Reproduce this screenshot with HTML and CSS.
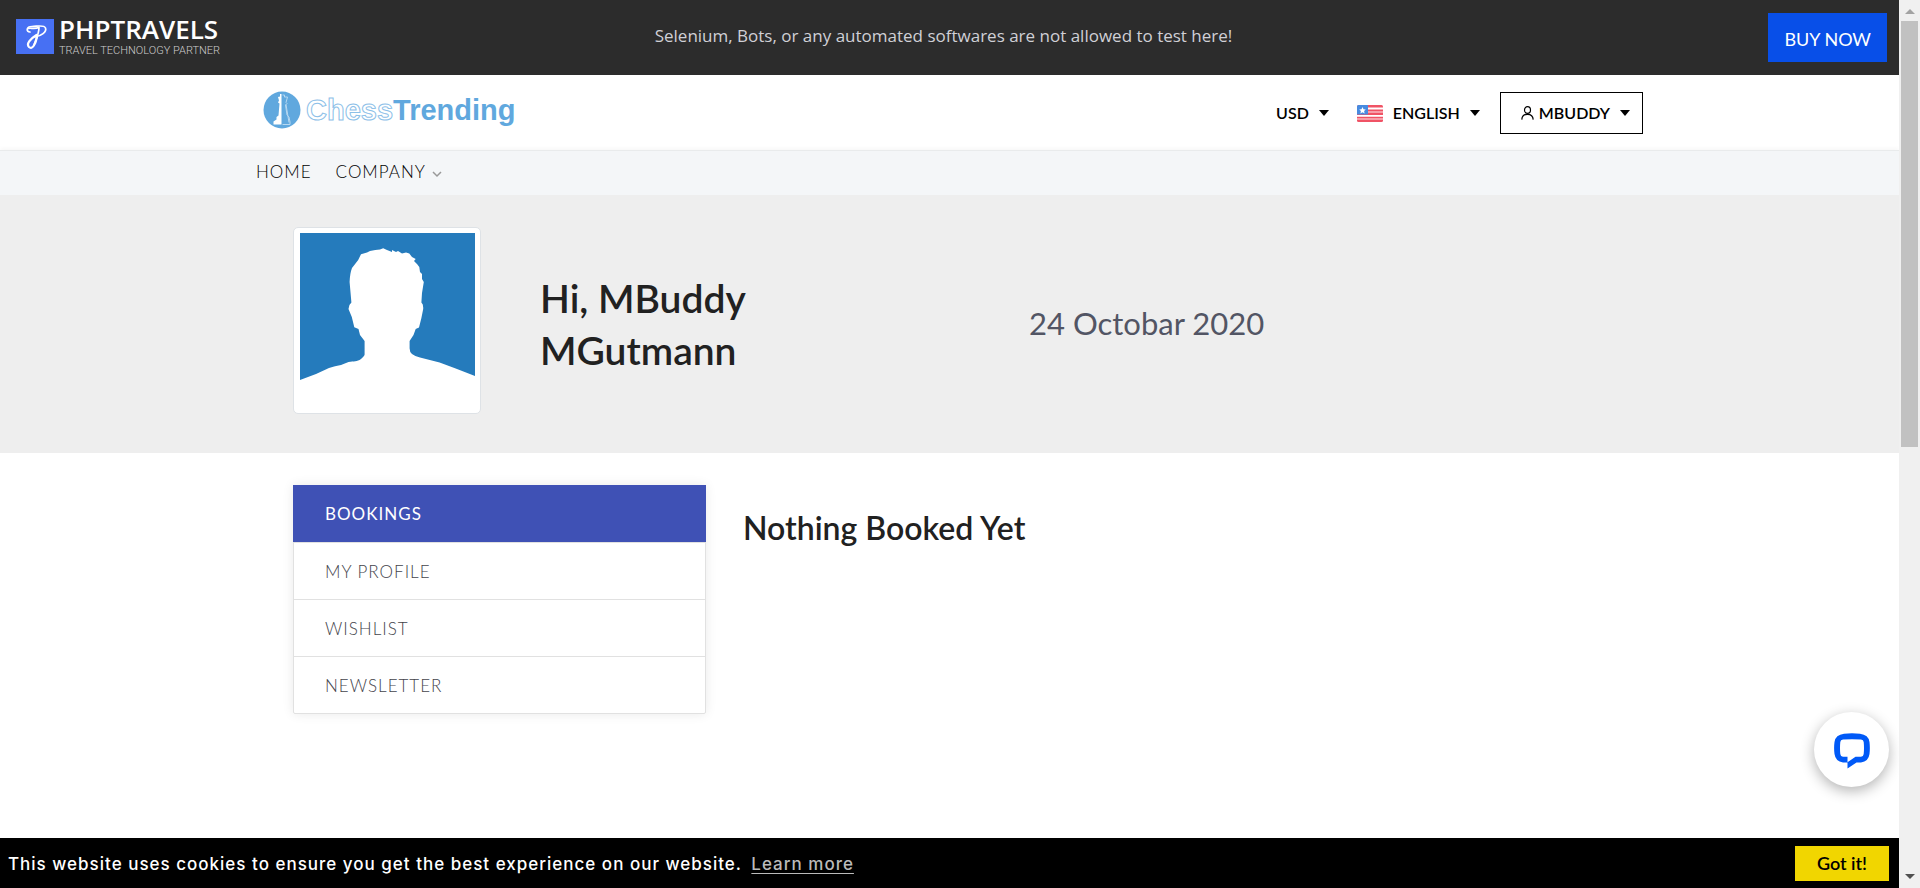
FILE: index.html
```html
<!DOCTYPE html>
<html lang="en">
<head>
<meta charset="utf-8">
<meta name="viewport" content="width=device-width, initial-scale=1">
<title>My Account</title>
<link rel="stylesheet" href="styles.css">
</head>
<body>
<div class="promo">
  <a class="brand" href="#">
    <svg class="brand-mark" viewBox="0 0 38 35" aria-hidden="true"><rect width="38" height="35" fill="#4770f3"/><g fill="none" stroke="#fff" stroke-linecap="round" stroke-linejoin="round"><path d="M14 13C10 13 10 7.500 16 7.500C21 7.500 28 5.500 29.500 9C31 13 25 17 19 18" stroke-width="1.700"/><path d="M12 9.500C15 8.500 18 10.500 23 8.500C23 15 20 20 18 26" stroke-width="1.700"/><path d="M20.500 16C14 20 10 25 13 28C16.500 31 19.500 25 21 18" stroke-width="2.200"/></g></svg>
    <span class="brand-text"><span class="brand-name">PHPTRAVELS</span><span class="brand-tag">TRAVEL TECHNOLOGY PARTNER</span></span>
  </a>
  <p class="promo-note">Selenium, Bots, or any automated softwares are not allowed to test here!</p>
  <a class="buy" href="#">BUY NOW</a>
</div>
<header class="header">
  <div class="container header-row">
    <a class="logo" href="#">
      <svg class="logo-mark" viewBox="0 0 38 38" aria-hidden="true"><circle cx="19" cy="19" r="18.500" fill="#60a8de"/><path d="M18.500 3v30.500H10.500v-3l3-2v-2.500l2-1.500 1-12-1.500-1 1-2-1-3.500 2-.5V3z" fill="#fff"/><path d="M19.500 4h2v2h3l-1.500 5.500 1 1-1.500 1.500 1.500 10 2 2 1 5v2.500H19.500M23 13.500l3 18" fill="none" stroke="#b6d8f1" stroke-width="1"/></svg>
      <span class="logo-text"><span class="logo-light">Chess</span><span>Trending</span></span>
    </a>
    <div class="tools">
      <button class="tool" type="button">USD <span class="caret"></span></button>
      <button class="tool" type="button">
        <svg class="flag" viewBox="0 0 26 17" aria-hidden="true"><rect width="26" height="17" rx="1.500" fill="#f05365"/><path d="M11 3.500h15M0 10.800h26" stroke="#fff" stroke-width="1.800"/><path d="M11 7h15M0 14h26" stroke="#f9b6be" stroke-width="1.500"/><path d="M1.500 0H11v9.500H0v-8A1.500 1.500 0 0 1 1.500 0z" fill="#478be0"/><path d="M5.500 2l1 2.200 2.300.3-1.700 1.600.5 2.400-2.100-1.200-2.100 1.200.5-2.400-1.700-1.600 2.300-.3z" fill="#fff"/></svg>
        ENGLISH <span class="caret"></span></button>
      <button class="tool account" type="button"><svg class="user" viewBox="0 0 13 14" aria-hidden="true"><g fill="none" stroke="#000" stroke-width="1.200"><ellipse cx="6.500" cy="4" rx="3" ry="3.300"/><path d="M.8 13.600C1 10 3.500 8.300 6.500 8.300s5.500 1.700 5.700 5.300"/></g></svg>MBUDDY <span class="caret"></span></button>
    </div>
  </div>
</header>
<nav class="nav">
  <div class="container nav-row">
    <a href="#">HOME</a>
    <a href="#">COMPANY <svg class="chev" viewBox="0 0 10 7" aria-hidden="true"><path d="M1 1l4 4 4-4" fill="none" stroke="#999" stroke-width="1.500"/></svg></a>
  </div>
</nav>
<section class="hero">
  <div class="container inset hero-row">
    <div class="avatar">
      <svg viewBox="0 0 175 175" role="img" aria-label="Profile picture"><rect width="175" height="175" fill="#257bbc"/><path fill="#fff" d="M0 147L16 141L29 135Q35 133 41 132L48.500 129C54 128 57 129 61 126Q65 123 64.600 121V108L60 102L58.500 96L54.300 94.300L51.800 84L48.500 76Q48.500 72 51.400 69.600L49.600 49Q50 40 52 35L58.200 27L61 21.300L67 19.600L70 18L75.300 17L80 16.500L83.200 15.300L87 17L92 19V17L96 19L98 18L102 20.500L106 19.500L109.300 20.600L112 24L115.700 26L114 28L117 31L119.300 34L120 39L122 41V46L123.800 49L122 60L121.400 69.600Q123.500 71 123.200 76L121.400 85L119 94.600L115.700 96L113.500 102L109.600 108V115Q109.500 119 112 121Q116 124 120 124.600L139.600 129.600L155.700 135.600L175 143V175H0Z"/></svg>
    </div>
    <h1 class="greeting">Hi, MBuddy MGutmann</h1>
    <p class="date">24 Octobar 2020</p>
  </div>
</section>
<main class="container inset main-row">
  <nav class="side" aria-label="Account">
    <a class="active" href="#">BOOKINGS</a>
    <a href="#">MY PROFILE</a>
    <a href="#">WISHLIST</a>
    <a href="#">NEWSLETTER</a>
  </nav>
  <h2 class="empty">Nothing Booked Yet</h2>
</main>
<button class="chat" type="button" aria-label="Open chat"><svg viewBox="0 0 36 36" aria-hidden="true"><path fill-rule="evenodd" d="M10 .8Q18-.2 26 .8Q34.500 1.800 35.500 9Q36.200 15 35.500 21Q34.500 28.500 27 29.500H22.500L13.500 35.500V29.500H9Q1.500 28.500.5 21Q-.3 15 .5 9Q1.500 1.800 10 .8ZM9 6.500Q6.500 6.800 6.300 9Q5.700 15 6.300 21Q6.500 23.500 9 23.800H13.500V29.300L21.500 23.800H27Q29.500 23.500 29.700 21Q30.300 15 29.700 9Q29.500 6.800 27 6.500Q18 5.900 9 6.500Z" fill="#0059f7"/></svg></button>
<div class="cookies">
  <p>This website uses cookies to ensure you get the best experience on our website. <a href="#">Learn more</a></p>
  <button class="got" type="button">Got it!</button>
</div>
<div class="scrollbar" aria-hidden="true"><span class="arrow up"></span><span class="thumb"></span><span class="arrow down"></span></div>
</body>
</html>
```
FILE: styles.css
```css
*{box-sizing:border-box}
:root{--bar:21px}
body{margin:0;padding-right:var(--bar);min-height:100vh;background:#fff;color:#212121;font-family:Lato,"Open Sans",sans-serif;font-size:17px;line-height:24px}
a{color:inherit;text-decoration:none}
h1,h2,p{margin:0}
button{border:0;background:none;padding:0;color:inherit;font:inherit;cursor:pointer}
svg{display:block}
.container{max-width:1387px;margin:0 auto}
.inset{padding:0 37px}

.promo{display:grid;grid-template-columns:1fr auto 1fr;align-items:center;height:75px;padding:0 12px 0 16px;background:#2c2c2c;color:#d0d0d6}
.brand{display:flex;gap:5px;color:#fff}
.brand-mark{width:38px;height:35px}
.brand-text{display:flex;flex-direction:column;margin-top:-2px}
.brand-name{font-family:"Open Sans",sans-serif;font-size:26px;line-height:24px;font-weight:600}
.brand-tag{font-family:Roboto,sans-serif;font-size:11px;line-height:12px;margin-top:4px;color:#ccc;font-weight:300}
.promo-note{font-family:"Open Sans",sans-serif;font-size:17px;font-weight:500;padding:0 16px 4px 0}
.buy{justify-self:end;background:#084fe8;color:#fff;padding:14px 16px 11px;font-size:18px}

.header-row{display:flex;justify-content:space-between;align-items:center;height:75px}
.logo{display:flex;align-items:center;gap:5px;margin-left:7px;padding-bottom:6px;color:#60a8de}
.logo-mark{width:38px;height:38px}
.logo-text{font:bold 29px/36px "Liberation Sans",Arial,sans-serif}
.logo-light{color:#fff;-webkit-text-stroke:1px #8cc0e8}
.tools{display:flex;align-items:center;padding-top:1px;color:#000;font-size:16px}
.tool{display:flex;align-items:center;font-weight:600;margin-right:28px}
.caret{border:5px solid transparent;border-top:6px solid #000;border-bottom:0;margin-left:10px}
.flag{width:26px;height:17px;margin-right:10px}
.account{border:1px solid #000;height:42px;padding:0 12px 0 20px;margin:0 0 0 -8px}
.user{width:13px;height:14px;margin-right:5px}

.nav{background:#f4f6f8;border-top:1px solid #e9ebec;box-shadow:0 -2px 4px rgba(0,0,0,.03)}
.nav-row{display:flex;gap:24px;height:44px;padding-bottom:2px;align-items:center;color:#000;font-weight:300;letter-spacing:1px}
.nav-row a{display:flex;align-items:center}
.chev{width:10px;height:7px;margin:5px 0 0 6px}

.hero{background:#eee;padding:32px 0 39px}
.hero-row{display:grid;grid-template-columns:247px 489px 1fr;align-items:center}
.avatar{width:188px;padding:5px 5px 5px 6px;border:1px solid #dee2e6;border-radius:5px;background:#fff}
.greeting{max-width:260px;padding-top:6px;font-size:39px;line-height:52px;font-weight:600}
.date{font-size:31px;line-height:40px;padding-top:5px;color:#525564}

.main-row{display:flex;gap:37px;padding-top:32px}
.side{flex:0 0 413px;border:1px solid #e1e1e1;border-radius:2px;box-shadow:0 0 12px rgba(0,0,0,.09);color:#44444c;font-weight:300;letter-spacing:1px}
.side a{display:block;padding:17px 31px 15px;border-top:1px solid #e1e1e1}
.side a.active{margin:-1px -1px 0;padding:17px 32px 16px;border:0;background:#3f51b5;color:#fff;font-weight:400}
.empty{padding-top:23px;font-size:32px;line-height:40px;font-weight:600}

.chat{position:fixed;right:31px;bottom:101px;width:75px;height:75px;border-radius:50%;background:#fff;box-shadow:0 4px 14px rgba(0,0,0,.3);display:grid;place-items:center;padding-top:2px}
.chat svg{width:36px;height:36px}
.cookies{position:fixed;left:0;right:var(--bar);bottom:0;height:50px;display:flex;align-items:center;justify-content:space-between;padding:0 10px 0 8px;background:#000;color:#fff;font-family:Inter,"Open Sans",sans-serif;font-weight:500;letter-spacing:1px}
.cookies p{padding-top:2px}
.cookies a{margin-left:4px;color:#bbb;text-decoration:underline;text-underline-offset:3px}
.got{background:#f1d600;color:#000;width:94px;height:35px;font-family:Lato,sans-serif;font-size:18px;font-weight:600}
.scrollbar{position:fixed;top:0;right:0;bottom:0;width:var(--bar);background:#f0f0f0;display:flex;flex-direction:column;align-items:center;padding:9px 0}
.thumb{width:17px;height:48vh;margin-top:7px;background:#c1c1c1}
.arrow{border:5px solid transparent}
.up{border-top:0;border-bottom-color:#a3a3a3}
.down{border-bottom:0;border-top-color:#505050;margin-top:auto}
```
